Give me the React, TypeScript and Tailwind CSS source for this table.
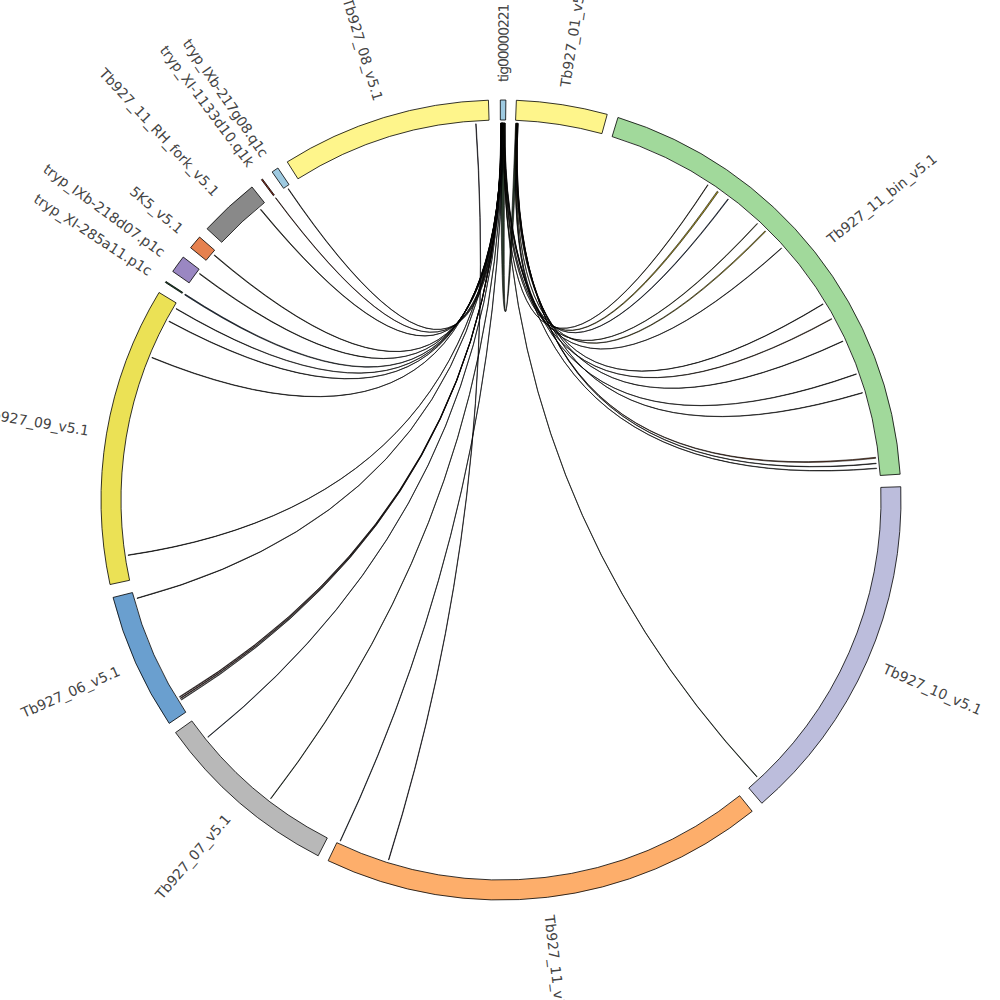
import React from "react";

const CX = 501;
const CY = 500;
const RO = 400;
const RI = 380;
const RC = 377;
const RL = 418;

function pt(a: number, r: number): [number, number] {
  const t = (a * Math.PI) / 180;
  return [CX + r * Math.sin(t), CY - r * Math.cos(t)];
}

function f(n: number) {
  return n.toFixed(2);
}

function sector(a1: number, a2: number) {
  const large = a2 - a1 > 180 ? 1 : 0;
  const [x1, y1] = pt(a1, RO);
  const [x2, y2] = pt(a2, RO);
  const [x3, y3] = pt(a2, RI);
  const [x4, y4] = pt(a1, RI);
  return `M${f(x1)},${f(y1)} A${RO},${RO} 0 ${large} 1 ${f(x2)},${f(y2)} L${f(x3)},${f(y3)} A${RI},${RI} 0 ${large} 0 ${f(x4)},${f(y4)} Z`;
}

function ribbon(s1: number, s2: number, t1: number, t2: number) {
  const [x1, y1] = pt(s1, RC);
  const [x2, y2] = pt(s2, RC);
  const [x3, y3] = pt(t1, RC);
  const [x4, y4] = pt(t2, RC);
  return `M${f(x1)},${f(y1)} A${RC},${RC} 0 0 1 ${f(x2)},${f(y2)} Q${CX},${CY} ${f(x3)},${f(y3)} A${RC},${RC} 0 0 1 ${f(x4)},${f(y4)} Q${CX},${CY} ${f(x1)},${f(y1)} Z`;
}

type Seg = { name: string; a1: number; a2: number; color: string; ls?: number };

const segs: Seg[] = [
  { name: "tig00000221", a1: -0.1, a2: 0.7, color: "#9ecae1", ls: -1.1 },
  { name: "Tb927_01_v5.1", a1: 2.2, a2: 15.4, color: "#fef58b" },
  { name: "Tb927_11_bin_v5.1", a1: 17.0, a2: 86.3, color: "#a1d99b" },
  { name: "Tb927_10_v5.1", a1: 88.1, a2: 139.3, color: "#bcbddc" },
  { name: "Tb927_11_v5.1", a1: 141.1, a2: 205.6, color: "#fdae6b" },
  { name: "Tb927_07_v5.1", a1: 207.2, a2: 234.45, color: "#b8b8b8" },
  { name: "Tb927_06_v5.1", a1: 236.05, a2: 255.9, color: "#6a9fcf" },
  { name: "Tb927_09_v5.1", a1: 257.8, a2: 301.25, color: "#ebe155" },
  { name: "tryp_XI-285a11.p1c", a1: 302.95, a2: 303.12, color: "#1d5b32" },
  { name: "tryp_IXb-218d07.p1c", a1: 304.85, a2: 307.4, color: "#9a87c2" },
  { name: "5K5_v5.1", a1: 309.1, a2: 311.1, color: "#e6814f" },
  { name: "Tb927_11_RH_fork_v5.1", a1: 312.7, a2: 321.5, color: "#898989" },
  { name: "tryp_XI-1133d10.q1k", a1: 323.2, a2: 323.38, color: "#a8321e" },
  { name: "tryp_IXb-217g08.q1c", a1: 325.1, a2: 326.1, color: "#9ecae1", ls: -0.4 },
  { name: "Tb927_08_v5.1", a1: 327.7, a2: 358.2, color: "#fef58b" },
];

type Chord = [number, number, number, number, string];

const chords: Chord[] = [
  // tig -> Tb927_01 (V shape)
  [-0.05, 0.62, 2.22, 2.62, "#2a3a2c"],
  // left / bottom from tig
  [-0.05, 0.0, 323.25, 323.32, "#7a2a1a"],
  [0.0, 0.04, 325.6, 325.68, "#333333"],
  [0.02, 0.07, 320.35, 320.45, "#3a3a2a"],
  [0.05, 0.1, 310.45, 310.55, "#3a3a2a"],
  [0.07, 0.12, 306.85, 306.95, "#3a3a2a"],
  [0.09, 0.17, 302.95, 303.1, "#2a3f5a"],
  [0.12, 0.17, 300.45, 300.53, "#333333"],
  [0.14, 0.19, 298.25, 298.33, "#333333"],
  [0.16, 0.21, 292.15, 292.23, "#333333"],
  [0.18, 0.23, 261.55, 261.62, "#333333"],
  [0.2, 0.25, 254.85, 254.92, "#333333"],
  [0.22, 0.27, 237.95, 238.05, "#6b6b6b"],
  [0.24, 0.29, 238.2, 238.3, "#5a3030"],
  [0.25, 0.3, 238.45, 238.55, "#5a3030"],
  [0.28, 0.32, 231.0, 231.07, "#23406b"],
  [0.3, 0.34, 217.6, 217.67, "#2e5233"],
  [0.32, 0.36, 205.2, 205.27, "#23406b"],
  [356.15, 356.22, 197.3, 197.37, "#3a2f5a"],
  [0.34, 0.38, 137.2, 137.27, "#2e5233"],
  // right to Tb927_11_bin
  [0.38, 0.42, 33.25, 33.32, "#5a4a2a"],
  [2.3, 2.36, 35.0, 35.2, "#b8a420"],
  [2.33, 2.4, 37.0, 37.1, "#1f3b6e"],
  [0.42, 0.46, 42.8, 42.88, "#6b6b2a"],
  [2.38, 2.44, 44.45, 44.6, "#c9b52e"],
  [0.46, 0.5, 48.05, 48.12, "#333333"],
  [2.42, 2.47, 58.65, 58.72, "#333333"],
  [0.5, 0.54, 61.25, 61.33, "#8a5a3a"],
  [2.45, 2.5, 65.05, 65.12, "#333333"],
  [0.54, 0.58, 70.45, 70.52, "#333333"],
  [2.48, 2.53, 73.45, 73.52, "#333333"],
  [2.5, 2.56, 83.5, 83.65, "#8a4a2a"],
  [2.53, 2.58, 84.4, 84.47, "#333333"],
  [0.58, 0.62, 85.15, 85.22, "#333333"],
];

function Label({ seg }: { seg: Seg }) {
  const mid = (seg.a1 + seg.a2) / 2;
  const [x, y] = pt(mid, RL);
  const right = mid < 180;
  const rot = right ? mid - 90 : mid + 90;
  return (
    <text
      transform={`translate(${f(x)},${f(y)}) rotate(${f(rot)})`}
      textAnchor={right ? "start" : "end"}
      dominantBaseline="central"
      fontSize={14}
      letterSpacing={seg.ls ?? 0}
      fill="#444444"
    >
      {seg.name}
    </text>
  );
}

export default function App() {
  return (
    <div className="w-[1000px] h-[1000px] bg-white overflow-hidden font-['DejaVu_Sans',sans-serif]">
      <svg width={1000} height={1000} viewBox="0 0 1000 1000" className="block">
        <g>
          {chords.map((c, i) => (
            <path
              key={i}
              d={ribbon(c[0], c[1], c[2], c[3])}
              fill={c[4]}
              stroke="#000000"
              strokeWidth={0.6}
              strokeLinejoin="round"
            />
          ))}
        </g>
        <g>
          {segs.map((s) => (
            <path
              key={s.name}
              d={sector(s.a1, s.a2)}
              fill={s.color}
              stroke="#000000"
              strokeWidth={0.8}
            />
          ))}
        </g>
        <g>
          {segs.map((s) => (
            <Label key={s.name} seg={s} />
          ))}
        </g>
      </svg>
    </div>
  );
}
